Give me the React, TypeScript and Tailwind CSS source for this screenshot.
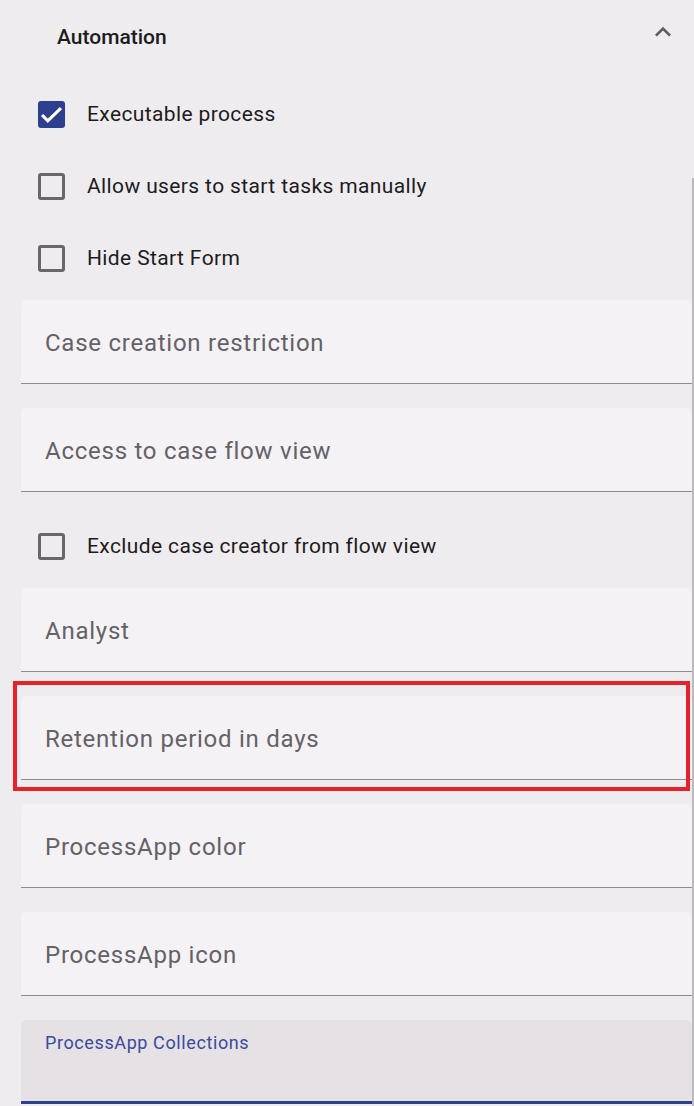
import React from "react";

function Checkbox({ checked }: { checked?: boolean }) {
  if (checked) {
    return (
      <div className="w-[27px] h-[27px] rounded-[3px] bg-[#2f3f8f] flex items-center justify-center shrink-0">
        <svg width="27" height="27" viewBox="0 0 24 24">
          <path d="M3.6 12.4 L8.7 17.6 L20.4 6.3" fill="none" stroke="#ffffff" strokeWidth="2.7" />
        </svg>
      </div>
    );
  }
  return <div className="w-[27px] h-[27px] rounded-[3px] border-[3px] border-[#69676c] shrink-0" />;
}

function CheckRow({ label, checked }: { label: string; checked?: boolean }) {
  return (
    <div className="h-[72px] flex items-center pl-[17px]">
      <Checkbox checked={checked} />
      <span className="ml-[22px] text-[21px] tracking-[0.375px] text-[#1d1b20] leading-none">{label}</span>
    </div>
  );
}

function Field({ label }: { label: string }) {
  return (
    <div className="h-[84px] rounded-t-[6px] bg-[#f5f2f5] border-b border-[#8d8b90] flex items-center pl-[24px] pt-[3px]">
      <span className="text-[24px] tracking-[0.75px] text-[#646167] leading-none">{label}</span>
    </div>
  );
}

export default function App() {
  return (
    <div
      className="relative w-full min-h-[1106px] h-[1106px] overflow-hidden bg-[#eeecef] flex"
      style={{ fontFamily: "Roboto, 'Noto Sans', sans-serif" }}
    >
      <div className="flex-1 pl-[21px]">
        <div className="h-[74px] flex items-center justify-between">
          <span className="pl-[36px] text-[21px] font-medium text-[#1d1b20] leading-none">Automation</span>
          <svg width="32" height="32" viewBox="0 0 24 24" className="mb-[10px] mr-[13px]">
            <path d="M12 8l-6 6 1.41 1.41L12 10.83l4.59 4.58L18 14z" fill="#5f5d62" />
          </svg>
        </div>
        <div className="mt-[4px]">
          <CheckRow label="Executable process" checked />
          <CheckRow label="Allow users to start tasks manually" />
          <CheckRow label="Hide Start Form" />
        </div>
        <div className="mt-[6px]">
          <Field label="Case creation restriction" />
        </div>
        <div className="mt-[24px]">
          <Field label="Access to case flow view" />
        </div>
        <div className="mt-[18px]">
          <CheckRow label="Exclude case creator from flow view" />
        </div>
        <div className="mt-[6px] flex flex-col gap-[24px]">
          <Field label="Analyst" />
          <Field label="Retention period in days" />
          <Field label="ProcessApp color" />
          <Field label="ProcessApp icon" />
          <div className="h-[84px] rounded-t-[6px] bg-[#e5e1e5] border-b-[3px] border-[#2e3f8e] pl-[24px] pt-[12px]">
            <span className="text-[18px] tracking-[0.6px] text-[#3a4a9c] leading-[21px]">ProcessApp Collections</span>
          </div>
        </div>
      </div>
      <div className="w-[2px] shrink-0 flex flex-col">
        <div className="mt-[178px] flex-1 bg-[#bdbabf]" />
      </div>
      <div className="absolute left-[13px] top-[681px] w-[677px] h-[110px] border-[4px] border-[#e8202a] pointer-events-none" />
    </div>
  );
}
